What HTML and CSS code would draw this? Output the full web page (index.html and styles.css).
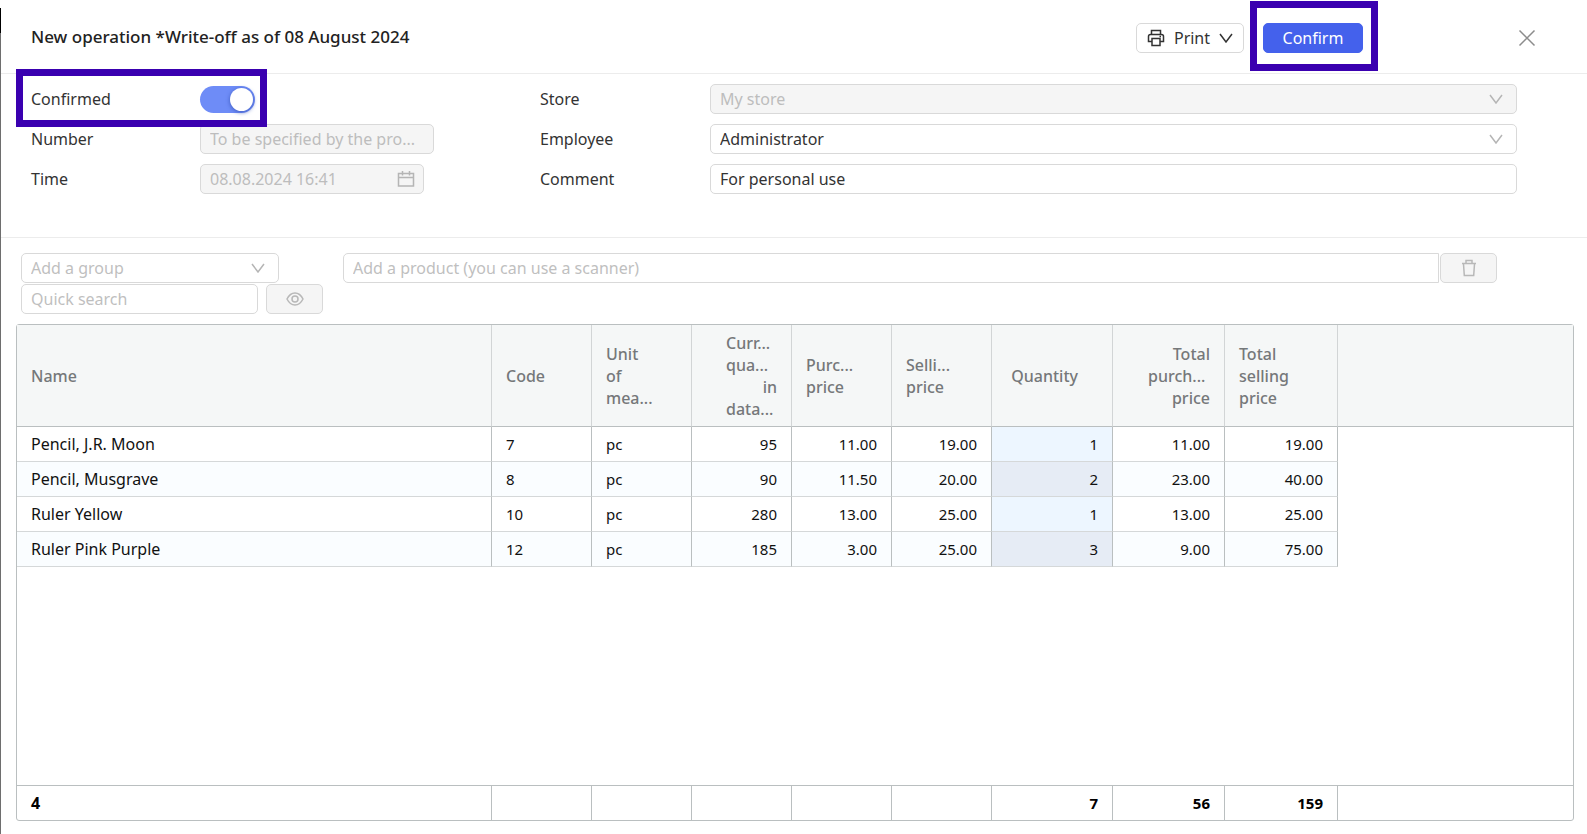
FILE: index.html
```html
<!DOCTYPE html>
<html lang="en">
<head>
<meta charset="utf-8">
<title>New operation</title>
<link rel="stylesheet" href="styles.css">
</head>
<body>
<header class="topbar">
  <h1 class="title">New operation *Write-off as of 08 August 2024</h1>
  <div class="actions">
    <button class="btn print" type="button">
      <svg class="icon" viewBox="0 0 18 18" width="18" height="18" aria-hidden="true"><path d="M4.5 5.500V1.500h9v4M4.500 12.500H1.500V7.500q0-2 2-2h11q2 0 2 2v5h-3M5 9.500h8v7H5zM12.500 7.500h1.500"/></svg>
      <span>Print</span>
      <svg class="icon" viewBox="0 0 14 10" width="14" height="10" aria-hidden="true"><path d="M1 1l6 8 6-8"/></svg>
    </button>
    <div class="marked marked-confirm"><button class="btn primary" type="button">Confirm</button></div>
    <button class="close" type="button" aria-label="Close"><svg viewBox="0 0 18 18" width="18" height="18" aria-hidden="true"><path d="M1.500 1.500l15 15M16.500 1.500l-15 15"/></svg></button>
  </div>
</header>
<form class="details">
  <div class="column">
    <div class="field marked marked-switch"><label for="confirmed">Confirmed</label><input class="switch" id="confirmed" type="checkbox" role="switch" checked></div>
    <div class="field"><label for="number">Number</label><input class="control number" id="number" type="text" value="To be specified by the pro..." disabled></div>
    <div class="field"><label for="time">Time</label>
      <div class="wrap time"><input class="control" id="time" type="text" value="08.08.2024 16:41" disabled>
        <svg class="adorn" viewBox="0 0 18 18" width="18" height="18" aria-hidden="true"><path d="M1.500 3.500h15v12.500h-15zM1.500 7.500h15M5.500 1v4.500M12.500 1v4.500"/></svg></div></div>
  </div>
  <div class="column wide">
    <div class="field"><label for="store">Store</label>
      <div class="wrap grow"><select class="control" id="store" disabled><option>My store</option></select>
        <svg class="adorn arrow" viewBox="0 0 14 10" width="14" height="10" aria-hidden="true"><path d="M1 1l6 8 6-8"/></svg></div></div>
    <div class="field"><label for="employee">Employee</label>
      <div class="wrap grow"><select class="control" id="employee"><option>Administrator</option></select>
        <svg class="adorn arrow" viewBox="0 0 14 10" width="14" height="10" aria-hidden="true"><path d="M1 1l6 8 6-8"/></svg></div></div>
    <div class="field"><label for="comment">Comment</label><input class="control grow" id="comment" type="text" value="For personal use"></div>
  </div>
</form>
<main class="items">
  <div class="tools">
    <div class="wrap group"><select class="control muted" aria-label="Add a group"><option>Add a group</option></select>
      <svg class="adorn arrow" viewBox="0 0 14 10" width="14" height="10" aria-hidden="true"><path d="M1 1l6 8 6-8"/></svg></div>
    <input class="control product" type="text" placeholder="Add a product (you can use a scanner)" aria-label="Add a product">
    <button class="btn tool" type="button" disabled aria-label="Delete"><svg viewBox="0 0 16 18" width="16" height="18" aria-hidden="true"><path d="M1 4.500h14M5 4V1.500h6V4M2.500 5l.8 11.500h9.400L13.500 5"/></svg></button>
  </div>
  <div class="tools second">
    <input class="control search" type="text" placeholder="Quick search" aria-label="Quick search">
    <button class="btn tool" type="button" disabled aria-label="Show"><svg viewBox="0 0 18 14" width="18" height="14" aria-hidden="true"><path d="M1 7q3-6 8-6t8 6q-3 6-8 6T1 7z"/><circle cx="9" cy="7" r="3"/></svg></button>
  </div>
  <div class="sheet">
    <table>
      <colgroup><col class="c-name"><col class="c-std"><col class="c-std"><col class="c-std"><col class="c-std"><col class="c-std"><col class="c-qty"><col class="c-total"><col class="c-sum"><col></colgroup>
      <thead><tr>
        <th>Name</th><th>Code</th><th>Unit<br>of<br>mea...</th>
        <th class="num"><span class="cut">Curr...</span><br><span class="cut">qua...</span><br>in<br><span class="cut">data...</span></th>
        <th>Purc...<br>price</th><th>Selli...<br>price</th><th class="num qty-head">Quantity</th>
        <th class="num">Total<br><span class="cut cut-wide">purch...</span><br>price</th><th>Total<br>selling<br>price</th><th></th>
      </tr></thead>
      <tbody>
        <tr><td>Pencil, J.R. Moon</td><td>7</td><td>pc</td><td class="num">95</td><td class="num">11.00</td><td class="num">19.00</td><td class="num qty">1</td><td class="num">11.00</td><td class="num">19.00</td></tr>
        <tr><td>Pencil, Musgrave</td><td>8</td><td>pc</td><td class="num">90</td><td class="num">11.50</td><td class="num">20.00</td><td class="num qty">2</td><td class="num">23.00</td><td class="num">40.00</td></tr>
        <tr><td>Ruler Yellow</td><td>10</td><td>pc</td><td class="num">280</td><td class="num">13.00</td><td class="num">25.00</td><td class="num qty">1</td><td class="num">13.00</td><td class="num">25.00</td></tr>
        <tr><td>Ruler Pink Purple</td><td>12</td><td>pc</td><td class="num">185</td><td class="num">3.00</td><td class="num">25.00</td><td class="num qty">3</td><td class="num">9.00</td><td class="num">75.00</td></tr>
      </tbody>
    </table>
    <table class="totals">
      <colgroup><col class="c-name"><col class="c-std"><col class="c-std"><col class="c-std"><col class="c-std"><col class="c-std"><col class="c-qty"><col class="c-total"><col class="c-sum"><col></colgroup>
      <tbody><tr><td>4</td><td></td><td></td><td></td><td></td><td></td><td class="num">7</td><td class="num">56</td><td class="num">159</td><td></td></tr></tbody>
    </table>
  </div>
</main>
</body>
</html>
```
FILE: styles.css
```css
*, ::before, ::after { box-sizing: border-box; }
body {
  margin: 0;
  min-height: 100vh;
  display: flex;
  flex-direction: column;
  position: relative;
  background: #fff;
  color: #333;
  font: 16px/24px "Noto Sans", "Open Sans", sans-serif;
}
/* edge of the window behind the panel */
body::before {
  content: "";
  position: absolute;
  left: 0;
  top: 8px;
  bottom: 0;
  width: 1px;
  background: linear-gradient(#000 25px, #6e6e6e 25px);
}
input, select, button { font: inherit; color: inherit; margin: 0; }
svg { display: block; fill: none; stroke: currentColor; stroke-width: 1.5; }

.topbar {
  height: 74px;
  padding: 0 45px 0 31px;
  display: flex;
  align-items: center;
  justify-content: space-between;
  border-bottom: 1px solid #ececec;
}
.title { margin: 0; font-size: 17px; font-weight: 500; color: #222; }
.actions { display: flex; align-items: center; padding-top: 2px; }
.btn {
  height: 30px;
  padding: 0 9px;
  display: flex;
  align-items: center;
  justify-content: center;
  border: 1px solid #d9d9d9;
  border-radius: 5px;
  background: #fff;
}
.print { width: 108px; gap: 9px; margin-right: 19px; }
.primary { width: 100px; border-color: #4461ec; background: #4461ec; color: #fff; }
.close { width: 30px; height: 30px; margin-left: 149px; padding: 6px; border: 0; background: none; color: #8c8c8c; }

.marked { position: relative; }
.marked::after {
  content: "";
  position: absolute;
  border: 7px solid #3a00b0;
  pointer-events: none;
}
.marked-confirm::after { inset: -22px -15px -18px -13px; }
.marked-switch::after { width: 251px; height: 58px; left: -15px; top: -15px; z-index: 1; }

.details {
  height: 164px;
  padding: 10px 70px 0 31px;
  display: flex;
  border-bottom: 1px solid #ececec;
}
.column { flex: 0 0 509px; display: flex; flex-direction: column; gap: 10px; }
.wide { flex: 1; }
.field { display: flex; align-items: center; height: 30px; }
.field label { flex: 0 0 169px; }
.wide label { flex-basis: 170px; }
.wrap { position: relative; }
.grow { flex: 1; }
.control {
  width: 100%;
  height: 30px;
  padding: 0 9px;
  border: 1px solid #d9d9d9;
  border-radius: 5px;
  background: #fff;
  appearance: none;
  outline: 0;
}
.control:disabled { background: #f5f5f5; color: #bdbdbd; opacity: 1; }
.control::placeholder { color: #bfbfbf; opacity: 1; }
.muted { color: #bfbfbf; }
.number { width: 234px; text-overflow: ellipsis; }
.time { width: 224px; }
.adorn { position: absolute; right: 9px; top: 6px; color: #b5b5b5; pointer-events: none; }
.arrow { right: 14px; top: 10px; }
.switch {
  appearance: none;
  width: 55px;
  height: 27px;
  padding: 2px;
  display: flex;
  justify-content: flex-end;
  border-radius: 14px;
  background: #6e8cf7;
}
.switch::before {
  content: "";
  width: 23px;
  height: 23px;
  border-radius: 50%;
  background: #fff;
  box-shadow: 0 1px 4px #3c5abe;
}
.switch:not(:checked) { justify-content: flex-start; background: #bfbfbf; }

.items { flex: 1; display: flex; flex-direction: column; padding: 15px 13px 13px 16px; }
.tools { display: flex; padding: 0 77px 0 5px; }
.group { width: 258px; margin-right: 64px; }
.product { flex: 1; border-radius: 5px 0 0 5px; margin-right: 1px; }
.tool { width: 57px; background: #f5f5f5; color: #b8b8b8; }
.second { margin: 1px 0 10px; gap: 8px; }
.search { width: 237px; }

.sheet {
  flex: 1;
  display: flex;
  flex-direction: column;
  justify-content: space-between;
  border: 1px solid #babfc0;
  border-radius: 3px;
}
table { width: 100%; table-layout: fixed; border-collapse: separate; border-spacing: 0; font-size: 15px; line-height: 22px; color: #111; }
.c-name { width: 475px; }
.c-std { width: 100px; }
.c-qty { width: 121px; }
.c-total { width: 112px; }
.c-sum { width: 113px; }
th, td { padding: 0 14px; text-align: left; border-right: 1px solid #babfc0; white-space: nowrap; }
th {
  height: 102px;
  background: #f5f7f7;
  color: #75787a;
  font-size: 16px;
  font-weight: 500;
  border-right-color: #d2d5d6;
  border-bottom: 1px solid #babfc0;
}
td { height: 35px; border-bottom: 1px solid #d5d8d9; }
td:first-child { font-size: 16px; }
tr > :nth-child(10) { border-right: 0; }
tbody tr:nth-child(even) td { background: #fafdff; }
tbody tr .qty { background: #edf6ff; }
tbody tr:nth-child(even) .qty { background: #e6ecf5; }
.num { text-align: right; }
.qty-head { padding-right: 34px; }
.cut { display: inline-block; width: 51px; text-align: left; vertical-align: top; }
.cut-wide { width: 62px; }
.totals { border-top: 1px solid #babfc0; font-weight: 700; color: #000; }
.totals td { height: 34px; border-bottom: 0; }
```
